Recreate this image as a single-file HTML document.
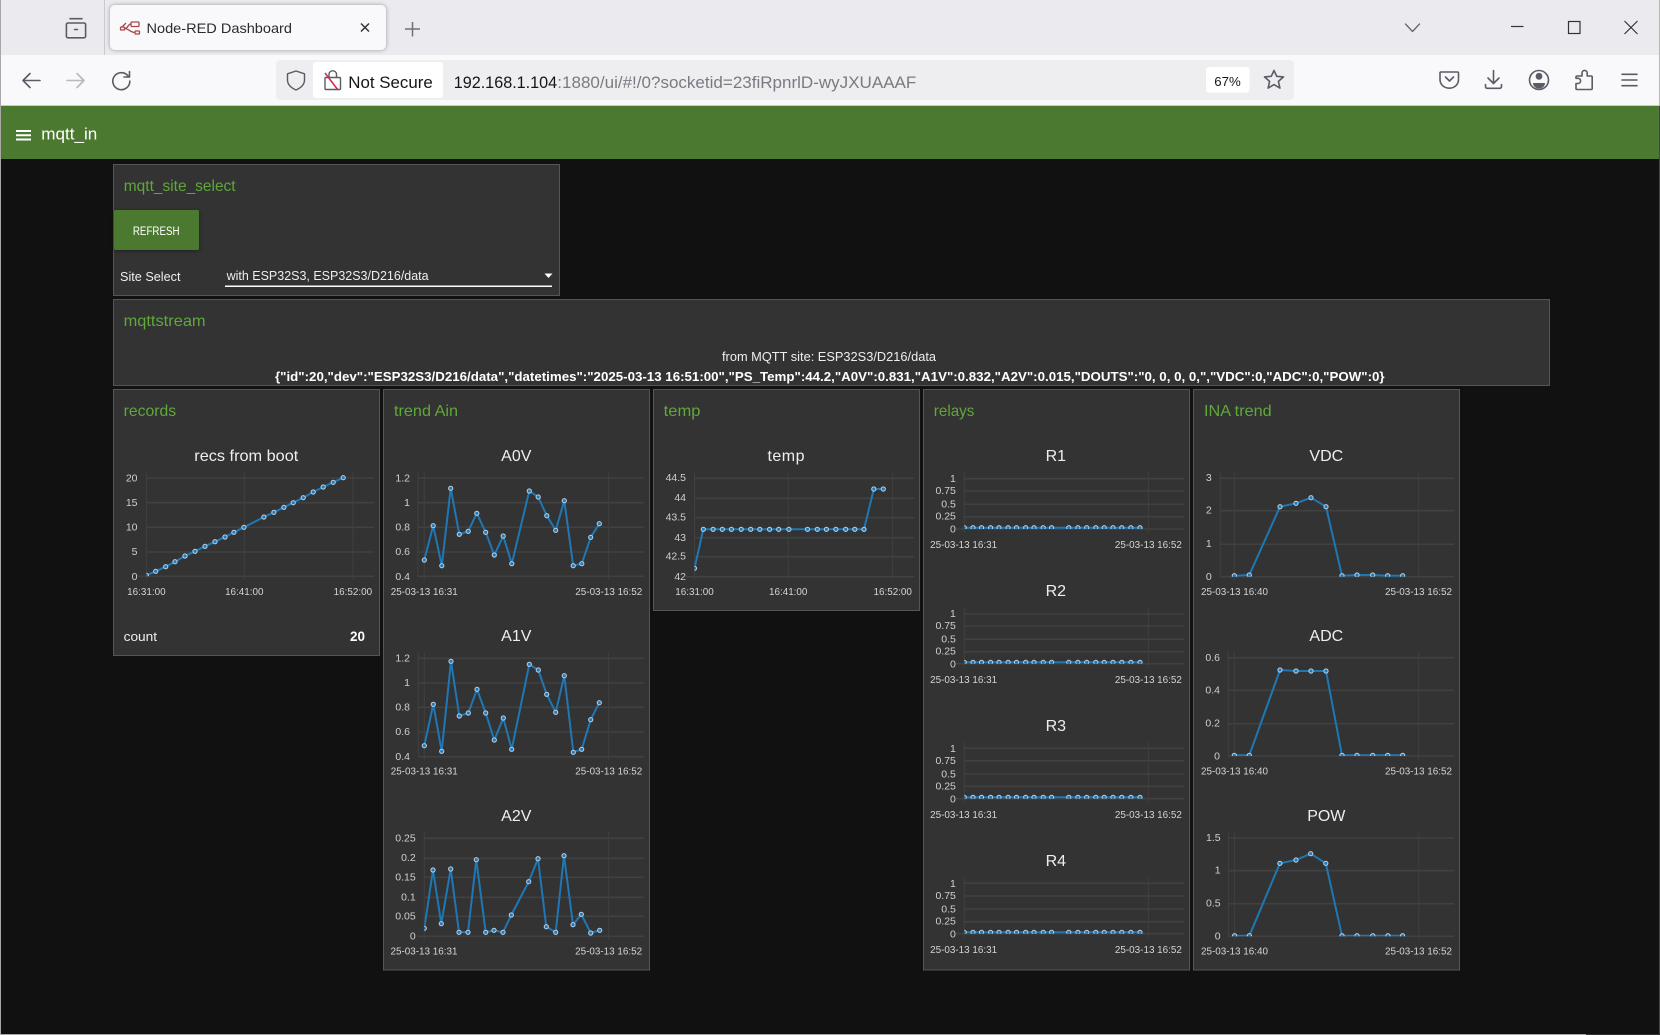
<!DOCTYPE html>
<html lang="en"><head><meta charset="utf-8"><title>Node-RED Dashboard</title>
<style>
html,body{margin:0;padding:0;width:1660px;height:1035px;overflow:hidden;background:#111}
svg{display:block;font-family:"Liberation Sans",Arial,sans-serif}
.panel{fill:#333;stroke:#555;stroke-width:1}
.pt{font-size:16px;fill:#5fa83a}
.ct{font-size:16px;fill:#eee;text-anchor:middle}
.y{font-size:10.5px;fill:#d0d0d0;text-anchor:end;transform:translateY(1px)}
.x{font-size:9.9px;fill:#d4d4d4;text-anchor:middle}
.g{stroke:#414141;stroke-width:1.6;fill:none}
.v{stroke:#404040;stroke-width:1;fill:none}
.d{fill:none;stroke:#1f77b4;stroke-width:2;stroke-linejoin:round;marker-start:url(#m);marker-mid:url(#m);marker-end:url(#m)}
.i{fill:none;stroke:#5b5b66;stroke-width:1.6;stroke-linecap:round;stroke-linejoin:round}
.w{font-size:13px;fill:#eee}
</style></head><body>
<svg width="1660" height="1035" viewBox="0 0 1660 1035" xmlns="http://www.w3.org/2000/svg">
<defs>
<marker id="m" markerWidth="7" markerHeight="7" refX="3.5" refY="3.5" markerUnits="userSpaceOnUse"><circle cx="3.5" cy="3.5" r="2.1" fill="#2f75ab" stroke="#b5d6ee" stroke-width="1"/></marker>
<clipPath id="c1"><rect x="146.4" y="470" width="230" height="106.3"/></clipPath>
<clipPath id="c3"><rect x="424.3" y="830" width="222" height="106.3"/></clipPath>
<clipPath id="c4"><rect x="694.5" y="470" width="222" height="106.7"/></clipPath>
<clipPath id="c5"><rect x="964.3" y="470" width="222" height="59"/></clipPath>
<clipPath id="c6"><rect x="964.3" y="600" width="222" height="63.7"/></clipPath>
<clipPath id="c7"><rect x="964.3" y="740" width="222" height="58.7"/></clipPath>
<clipPath id="c8"><rect x="964.3" y="875" width="222" height="58.7"/></clipPath>
<clipPath id="c9"><rect x="1220" y="470" width="236" height="106.7"/></clipPath>
<clipPath id="c10"><rect x="1220" y="650" width="236" height="106"/></clipPath>
<clipPath id="c11"><rect x="1220" y="830" width="236" height="106.3"/></clipPath>
</defs>

<!-- browser chrome -->
<rect width="1660" height="1035" fill="#111"/>
<rect width="1660" height="55" fill="#ebebef"/>
<rect y="55" width="1660" height="50" fill="#f9f9fb"/>
<rect y="105" width="1660" height="1" fill="#c8c8c8"/>
<rect x="0" y="0" width="1" height="1035" fill="#a8a8a8"/>
<rect x="1659" y="0" width="1" height="106" fill="#b8b8b8"/>
<rect x="1659" y="106" width="1" height="929" fill="#444"/>
<rect x="104" y="0" width="1" height="55" fill="#c9c9ce"/>
<path class="i" d="M70 18.700h12M68 23h16a1.600 1.600 0 0 1 1.600 1.600v11.600a1.600 1.600 0 0 1-1.600 1.600H68a1.600 1.600 0 0 1-1.600-1.600V24.600a1.600 1.600 0 0 1 1.600-1.600zM74.500 29.500h3"/>
<rect x="110" y="5" width="276" height="45" rx="5" fill="#f9f9fb" style="filter:drop-shadow(0 0.5px 2px rgba(0,0,0,.35))"/>
<g fill="none" stroke="#a8474a" stroke-width="1.300"><rect x="131" y="22" width="8" height="4.500" rx="1"/><rect x="120.500" y="27" width="4" height="3" rx=".8"/><rect x="135" y="31" width="4.500" height="3" rx=".8"/><path d="M124.500 28.500c4 0 3-4.500 6.500-4.500M124.500 28.500c4 0 6 4 10.500 4M122 27l4-4"/></g>
<text x="146.500" y="33" font-size="14" fill="#2b2a33" textLength="145.500" lengthAdjust="spacingAndGlyphs">Node-RED Dashboard</text>
<path d="M361 23.500l8 8M369 23.500l-8 8" stroke="#333" stroke-width="1.500" fill="none"/>
<path d="M412.500 22v14.500M405 29h15" stroke="#6f6f78" stroke-width="1.500" fill="none"/>
<path class="i" d="M1405.500 24l7 7.500 7-7.500" style="stroke-width:1.300;stroke:#66666f"/>
<path d="M1511 26.500h12.500" stroke="#333" stroke-width="1.200"/>
<rect x="1568.500" y="21.500" width="11.500" height="12" fill="none" stroke="#333" stroke-width="1.200"/>
<path d="M1624.500 21l13 13M1637.500 21l-13 13" stroke="#333" stroke-width="1.200"/>
<path class="i" d="M40 80.500H23M30 73.500l-7 7 7 7"/>
<path class="i" style="stroke:#b8b8be" d="M67 80.500h17M77 73.500l7 7-7 7"/>
<path class="i" d="M128.700 77A8.500 8.500 0 1 0 129.800 81M129.500 71.500v5.500h-5.500"/>
<rect x="276" y="60" width="1018" height="40" rx="4" fill="#eeeef1"/>
<path class="i" d="M296 71l8.500 2.800v6.200c0 5-4 8-8.500 10-4.500-2-8.500-5-8.500-10v-6.200z" style="stroke-width:1.400"/>
<rect x="313" y="62" width="130" height="36" rx="3" fill="#fff"/>
<path class="i" style="stroke-width:1.400" d="M329 77v-3a3.800 3.800 0 0 1 7.500 0v3M326 77.500h13.500a1 1 0 0 1 1 1v10a1 1 0 0 1-1 1H326a1 1 0 0 1-1-1v-10a1 1 0 0 1 1-1z"/>
<path d="M325 73l13 17" stroke="#d7264d" stroke-width="1.500" fill="none"/>
<text x="348.300" y="88" font-size="17" fill="#15141a" textLength="84.500" lengthAdjust="spacingAndGlyphs">Not Secure</text>
<text x="453.700" y="88" font-size="17" fill="#15141a" textLength="103.500" lengthAdjust="spacingAndGlyphs">192.168.1.104</text>
<text x="557.300" y="88" font-size="17" fill="#7a7a82" textLength="359" lengthAdjust="spacingAndGlyphs">:1880/ui/#!/0?socketid=23fiRpnrlD-wyJXUAAAF</text>
<rect x="1206" y="67" width="43.500" height="25.700" rx="3" fill="#fff"/>
<text x="1214.300" y="86" font-size="13" fill="#15141a" textLength="26.500" lengthAdjust="spacingAndGlyphs">67%</text>
<path class="i" d="M1274 70.500l2.700 5.800 6.800.6-5.100 4.500 1.500 6.700-5.900-3.500-5.900 3.500 1.500-6.700-5.100-4.500 6.800-.6z"/>
<path class="i" d="M1441 72h16.500a1 1 0 0 1 1 1v6.500c0 5-4 8.700-9.200 8.700s-9.300-3.700-9.300-8.700V73a1 1 0 0 1 1-1zM1445.500 77l4 4 4-4"/>
<path class="i" d="M1493.500 70.500V83M1488 78l5.500 5.500 5.500-5.500M1485.500 84.500v2a1.800 1.800 0 0 0 1.800 1.800h12.400a1.800 1.800 0 0 0 1.800-1.800v-2"/>
<circle class="i" cx="1539" cy="80" r="9.500"/><circle cx="1539" cy="76.300" r="3.400" fill="#5b5b66"/><path d="M1533 83h12c0 3-2.500 5.500-6 5.500s-6-2.500-6-5.500z" fill="#5b5b66"/>
<path class="i" d="M1582 76v-3a2.600 2.600 0 0 1 5.200 0v3h4a1 1 0 0 1 1 1v11.500a1 1 0 0 1-1 1H1577a1 1 0 0 1-1-1v-5h2a2.600 2.600 0 0 0 0-5.200h-2V77a1 1 0 0 1 1-1z"/>
<path class="i" d="M1622 74.300h15M1622 80h15M1622 85.700h15"/>

<!-- header -->
<rect x="1" y="106" width="1658" height="53" fill="#4b7930"/>
<path d="M16 131h15M16 135.300h15M16 139.500h15" stroke="#fff" stroke-width="2"/>
<text x="41.300" y="139.500" font-size="17" fill="#fff" textLength="56" lengthAdjust="spacingAndGlyphs">mqtt_in</text>

<!-- panels -->
<rect class="panel" x="113.500" y="164.500" width="446" height="131"/>
<rect class="panel" x="113.500" y="299.500" width="1436" height="86"/>
<rect class="panel" x="113.500" y="389.500" width="266" height="266"/>
<rect class="panel" x="383.500" y="389.500" width="266" height="580.500"/>
<rect class="panel" x="653.500" y="389.500" width="266" height="221"/>
<rect class="panel" x="923.500" y="389.500" width="266" height="580.500"/>
<rect class="panel" x="1193.500" y="389.500" width="266" height="580.500"/>

<text class="pt" x="123.800" y="191" textLength="111.800" lengthAdjust="spacingAndGlyphs">mqtt_site_select</text>
<text class="pt" x="123.600" y="326" textLength="82" lengthAdjust="spacingAndGlyphs">mqttstream</text>
<text class="pt" x="123.600" y="416" textLength="52.500" lengthAdjust="spacingAndGlyphs">records</text>
<text class="pt" x="394" y="416" textLength="64" lengthAdjust="spacingAndGlyphs">trend Ain</text>
<text class="pt" x="663.700" y="416" textLength="36.800" lengthAdjust="spacingAndGlyphs">temp</text>
<text class="pt" x="933.800" y="416" textLength="40.600" lengthAdjust="spacingAndGlyphs">relays</text>
<text class="pt" x="1204" y="416" textLength="67.700" lengthAdjust="spacingAndGlyphs">INA trend</text>

<!-- site select -->
<rect x="114" y="210" width="85" height="40" rx="1.500" fill="#4b7930" style="filter:drop-shadow(0 1px 2px rgba(0,0,0,.4))"/>
<text x="132.900" y="235" font-size="11.500" fill="#fff" textLength="46.600" lengthAdjust="spacingAndGlyphs">REFRESH</text>
<text class="w" x="120" y="281" textLength="60.500" lengthAdjust="spacingAndGlyphs">Site Select</text>
<text class="w" x="226.600" y="280" textLength="202" lengthAdjust="spacingAndGlyphs">with ESP32S3, ESP32S3/D216/data</text>
<path d="M544.500 273.500h8l-4 4.500z" fill="#fff"/>
<rect x="225" y="285.500" width="327" height="1.500" fill="#fff"/>

<!-- stream -->
<text class="w" x="722" y="361" textLength="214" lengthAdjust="spacingAndGlyphs">from MQTT site: ESP32S3/D216/data</text>
<text x="275" y="381" font-size="13" font-weight="bold" fill="#fff" textLength="1109.600" lengthAdjust="spacingAndGlyphs">{"id":20,"dev":"ESP32S3/D216/data","datetimes":"2025-03-13 16:51:00","PS_Temp":44.2,"A0V":0.831,"A1V":0.832,"A2V":0.015,"DOUTS":"0, 0, 0, 0,","VDC":0,"ADC":0,"POW":0}</text>

<!-- records -->
<text class="ct" x="246.300" y="461" textLength="104" lengthAdjust="spacingAndGlyphs">recs from boot</text>
<path class="g" d="M146 478H374M146 502.700H374M146 527.300H374M146 552H374M138 576.300H374"/>
<path class="v" d="M146.400 472.300V580M244.300 472.300V580M352.900 472.300V580"/>
<g class="yy"><text class="y" x="137.500" y="480.500">20</text><text class="y" x="137.500" y="505">15</text><text class="y" x="137.500" y="529.500">10</text><text class="y" x="137.500" y="554">5</text><text class="y" x="137.500" y="579">0</text></g>
<text class="x" x="146.400" y="595">16:31:00</text><text class="x" x="244.300" y="595">16:41:00</text><text class="x" x="352.900" y="595">16:52:00</text>
<g clip-path="url(#c1)"><polyline class="d" points="146.400,575.300 155.700,571.300 165.700,566.700 175,561.700 185,556 195,551.300 205,546.300 215,541.700 225,537 233.900,532.300 243.900,527.300 263.900,517 273.900,512.300 283.900,507.300 293.200,502.700 303.200,497.700 313.200,492 323.200,487 333.200,482.300 343.200,477.700"/></g>
<text class="w" x="123.600" y="641" textLength="33.500" lengthAdjust="spacingAndGlyphs">count</text>
<text x="350" y="641" font-size="13.500" font-weight="bold" fill="#fff" textLength="15" lengthAdjust="spacingAndGlyphs">20</text>

<!-- A0V -->
<text class="ct" x="516.300" y="461">A0V</text>
<path class="g" d="M418 478H644M418 502.700H644M418 527.300H644M418 552H644M418 576.300H644"/>
<path class="v" d="M417.900 472.300V576M424.300 472.300V580M608.700 472.300V580"/>
<text class="y" x="410" y="480.500">1.2</text><text class="y" x="410" y="505">1</text><text class="y" x="410" y="529.500">0.8</text><text class="y" x="410" y="554">0.6</text><text class="y" x="410" y="579">0.4</text>
<text class="x" x="424.200" y="595">25-03-13 16:31</text><text class="x" x="608.800" y="595">25-03-13 16:52</text>
<polyline class="d" points="424.300,560 433.200,525.700 441.800,565.700 450.700,488.300 459.300,534.300 468.200,531.300 476.800,513.300 485.700,532.300 494.300,555 503.200,536 511.800,563.700 529.300,491 538.200,497 546.800,515.700 555.700,530.300 564.300,500.700 573.200,565.700 581.800,563.700 590.700,537.300 599.300,523.700"/>

<!-- A1V -->
<text class="ct" x="516.300" y="641">A1V</text>
<path class="g" d="M418 658.300H644M418 683H644M418 707.300H644M418 732H644M418 756.700H644"/>
<path class="v" d="M418.300 652.300V756M424.300 652.300V760M608.700 652.300V760"/>
<text class="y" x="410" y="660.500">1.2</text><text class="y" x="410" y="685">1</text><text class="y" x="410" y="709.500">0.8</text><text class="y" x="410" y="734">0.6</text><text class="y" x="410" y="759">0.4</text>
<text class="x" x="424.200" y="774.500">25-03-13 16:31</text><text class="x" x="608.800" y="774.500">25-03-13 16:52</text>
<polyline class="d" points="424.300,745.700 433.300,704.300 441.700,751.300 451,661.300 459.300,716 468.300,713 477,689.300 485.700,713 494.300,740 503.300,718 511.700,749.300 529.300,664.300 538.300,670 546.700,694.300 555.700,712.300 564.300,675.700 573.300,752.300 581.700,749.300 590.700,719.700 599.300,702.700"/>

<!-- A2V -->
<text class="ct" x="516.300" y="821">A2V</text>
<path class="g" d="M424 838.300H644M424 858.300H644M424 877.300H644M424 897.300H644M424 916.300H644M418 936.300H644"/>
<path class="v" d="M424.300 832V940M608.700 832V940"/>
<text class="y" x="415.700" y="840.500">0.25</text><text class="y" x="415.700" y="860">0.2</text><text class="y" x="415.700" y="879.500">0.15</text><text class="y" x="415.700" y="899.500">0.1</text><text class="y" x="415.700" y="918.500">0.05</text><text class="y" x="415.700" y="938.500">0</text>
<text class="x" x="424" y="954.500">25-03-13 16:31</text><text class="x" x="608.600" y="954.500">25-03-13 16:52</text>
<g clip-path="url(#c3)"><polyline class="d" points="424.300,928.300 433,870 441.300,923.700 450.700,869 459,932.300 468,932.300 476.300,859.700 485.700,932.300 494,930.300 503,932.300 511.300,915 528.700,881.700 538,858.700 546.300,926.700 555.700,932.300 564,855.700 573,924.700 581.300,914.300 590.700,933 599.700,930.300"/></g>

<!-- temp -->
<text class="ct" x="786" y="461" textLength="37">temp</text>
<path class="g" d="M694 478.300H914M694 498.300H914M694 517.700H914M694 537.700H914M694 556.700H914M686 576.700H914"/>
<path class="v" d="M694.500 472.300V580M788.200 472.300V580M892.700 472.300V580"/>
<text class="y" x="686" y="480">44.5</text><text class="y" x="686" y="500">44</text><text class="y" x="686" y="519.500">43.5</text><text class="y" x="686" y="540">43</text><text class="y" x="686" y="558.500">42.5</text><text class="y" x="686" y="579">42</text>
<text class="x" x="694.500" y="595">16:31:00</text><text class="x" x="788.200" y="595">16:41:00</text><text class="x" x="892.700" y="595">16:52:00</text>
<g clip-path="url(#c4)"><polyline class="d" points="694.500,568.300 703.300,529.300 713.100,529.300 722.300,529.300 731.400,529.300 741.200,529.300 750.700,529.300 759.800,529.300 769.600,529.300 778.700,529.300 788.900,529.300 807.500,529.300 817.300,529.300 826.400,529.300 835.900,529.300 845.700,529.300 854.800,529.300 864,529.300 873.800,489 883.300,489"/></g>

<!-- R1 -->
<text class="ct" x="1055.800" y="461">R1</text>
<path class="g" d="M964 478.700H1184M964 491H1184M964 504.300H1184M964 516.700H1184M956 529H1184"/>
<path class="v" d="M964.300 472.300V533M1148.400 472.300V533"/>
<text class="y" x="955.900" y="481">1</text><text class="y" x="955.900" y="493">0.75</text><text class="y" x="955.900" y="506.500">0.5</text><text class="y" x="955.900" y="518.500">0.25</text><text class="y" x="955.900" y="531.500">0</text>
<text class="x" x="963.600" y="548">25-03-13 16:31</text><text class="x" x="1148.400" y="548">25-03-13 16:52</text>
<g clip-path="url(#c5)"><polyline class="d" points="964.300,527.700 973,527.700 981.500,527.700 990.600,527.700 999,527.700 1008.100,527.700 1016.500,527.700 1025.700,527.700 1034,527.700 1043.200,527.700 1051.600,527.700 1068.800,527.700 1077.900,527.700 1086.700,527.700 1095.800,527.700 1104.200,527.700 1113,527.700 1121.800,527.700 1130.900,527.700 1140,527.700"/></g>

<!-- R2 -->
<text class="ct" x="1055.800" y="596">R2</text>
<path class="g" d="M964 614H1184M964 626H1184M964 639.300H1184M964 651.700H1184M956 663.700H1184"/>
<path class="v" d="M964.300 607.300V668M1148.400 607.300V668"/>
<text class="y" x="955.900" y="616">1</text><text class="y" x="955.900" y="628">0.75</text><text class="y" x="955.900" y="641.500">0.5</text><text class="y" x="955.900" y="653.500">0.25</text><text class="y" x="955.900" y="666.500">0</text>
<text class="x" x="963.600" y="683">25-03-13 16:31</text><text class="x" x="1148.400" y="683">25-03-13 16:52</text>
<g clip-path="url(#c6)"><polyline class="d" points="964.300,662.300 973,662.300 981.500,662.300 990.600,662.300 999,662.300 1008.100,662.300 1016.500,662.300 1025.700,662.300 1034,662.300 1043.200,662.300 1051.600,662.300 1068.800,662.300 1077.900,662.300 1086.700,662.300 1095.800,662.300 1104.200,662.300 1113,662.300 1121.800,662.300 1130.900,662.300 1140,662.300"/></g>

<!-- R3 -->
<text class="ct" x="1055.800" y="731">R3</text>
<path class="g" d="M964 748.300H1184M964 760.700H1184M964 774H1184M964 786.300H1184M956 798.700H1184"/>
<path class="v" d="M964.300 742.300V803M1148.400 742.300V803"/>
<text class="y" x="955.900" y="751">1</text><text class="y" x="955.900" y="763">0.75</text><text class="y" x="955.900" y="776.500">0.5</text><text class="y" x="955.900" y="788.500">0.25</text><text class="y" x="955.900" y="801.500">0</text>
<text class="x" x="963.600" y="818">25-03-13 16:31</text><text class="x" x="1148.400" y="818">25-03-13 16:52</text>
<g clip-path="url(#c7)"><polyline class="d" points="964.300,797.300 973,797.300 981.500,797.300 990.600,797.300 999,797.300 1008.100,797.300 1016.500,797.300 1025.700,797.300 1034,797.300 1043.200,797.300 1051.600,797.300 1068.800,797.300 1077.900,797.300 1086.700,797.300 1095.800,797.300 1104.200,797.300 1113,797.300 1121.800,797.300 1130.900,797.300 1140,797.300"/></g>

<!-- R4 -->
<text class="ct" x="1055.800" y="866">R4</text>
<path class="g" d="M964 883.300H1184M964 896H1184M964 909H1184M964 921.700H1184M956 933.700H1184"/>
<path class="v" d="M964.300 877.300V938M1148.400 877.300V938"/>
<text class="y" x="955.900" y="886">1</text><text class="y" x="955.900" y="898">0.75</text><text class="y" x="955.900" y="911.500">0.5</text><text class="y" x="955.900" y="923.500">0.25</text><text class="y" x="955.900" y="936.500">0</text>
<text class="x" x="963.600" y="953">25-03-13 16:31</text><text class="x" x="1148.400" y="953">25-03-13 16:52</text>
<g clip-path="url(#c8)"><polyline class="d" points="964.300,932.300 973,932.300 981.500,932.300 990.600,932.300 999,932.300 1008.100,932.300 1016.500,932.300 1025.700,932.300 1034,932.300 1043.200,932.300 1051.600,932.300 1068.800,932.300 1077.900,932.300 1086.700,932.300 1095.800,932.300 1104.200,932.300 1113,932.300 1121.800,932.300 1130.900,932.300 1140,932.300"/></g>

<!-- VDC -->
<text class="ct" x="1326.300" y="461">VDC</text>
<path class="g" d="M1220 478.300H1454M1220 510.700H1454M1220 544.300H1454M1220 576.700H1454"/>
<path class="v" d="M1220.300 472.300V576M1234.300 472.300V580M1418.700 472.300V580"/>
<text class="y" x="1211.700" y="480">3</text><text class="y" x="1211.700" y="512.500">2</text><text class="y" x="1211.700" y="546">1</text><text class="y" x="1211.700" y="579">0</text>
<text class="x" x="1234.500" y="595">25-03-13 16:40</text><text class="x" x="1418.500" y="595">25-03-13 16:52</text>
<g clip-path="url(#c9)"><polyline class="d" points="1234.300,575.700 1249.300,575 1280,506.700 1296,503.300 1311,497.700 1326,506.700 1342,575.700 1357,575 1372.700,575 1387.700,575.700 1402.700,575.700"/></g>

<!-- ADC -->
<text class="ct" x="1326.300" y="641">ADC</text>
<path class="g" d="M1228 657.700H1454M1228 690.300H1454M1228 723.700H1454M1228 756H1454"/>
<path class="v" d="M1228.300 651.700V756M1234.300 651.700V760M1418.700 651.700V760"/>
<text class="y" x="1220" y="660">0.6</text><text class="y" x="1220" y="692.500">0.4</text><text class="y" x="1220" y="725.500">0.2</text><text class="y" x="1220" y="758.500">0</text>
<text class="x" x="1234.500" y="774.500">25-03-13 16:40</text><text class="x" x="1418.500" y="774.500">25-03-13 16:52</text>
<g clip-path="url(#c10)"><polyline class="d" points="1234.300,755.300 1249.300,755.300 1280,670 1296,671 1311,671 1326,671 1342,755.300 1357,755.300 1372.700,755.300 1387.700,755.300 1402.700,755.300"/></g>

<!-- POW -->
<text class="ct" x="1326.300" y="821">POW</text>
<path class="g" d="M1228 838H1454M1228 870.700H1454M1228 903.700H1454M1228 936.300H1454"/>
<path class="v" d="M1228.700 832.300V936M1234.600 832.300V940M1418.800 832.300V940"/>
<text class="y" x="1220.600" y="840">1.5</text><text class="y" x="1220.600" y="872.500">1</text><text class="y" x="1220.600" y="905.500">0.5</text><text class="y" x="1220.600" y="938.500">0</text>
<text class="x" x="1234.500" y="954.500">25-03-13 16:40</text><text class="x" x="1418.500" y="954.500">25-03-13 16:52</text>
<g clip-path="url(#c11)"><polyline class="d" points="1234.600,935.700 1249.400,935.700 1279.900,863.300 1296,860 1310.700,853.700 1325.800,863.300 1342,935.700 1357,935.700 1372.800,935.700 1387.900,935.700 1402.600,935.700"/></g>

<rect x="0" y="1034" width="1586" height="1" fill="#a8a8a8"/>
<rect x="1586" y="1034" width="74" height="1" fill="#333"/>
</svg>
</body></html>
